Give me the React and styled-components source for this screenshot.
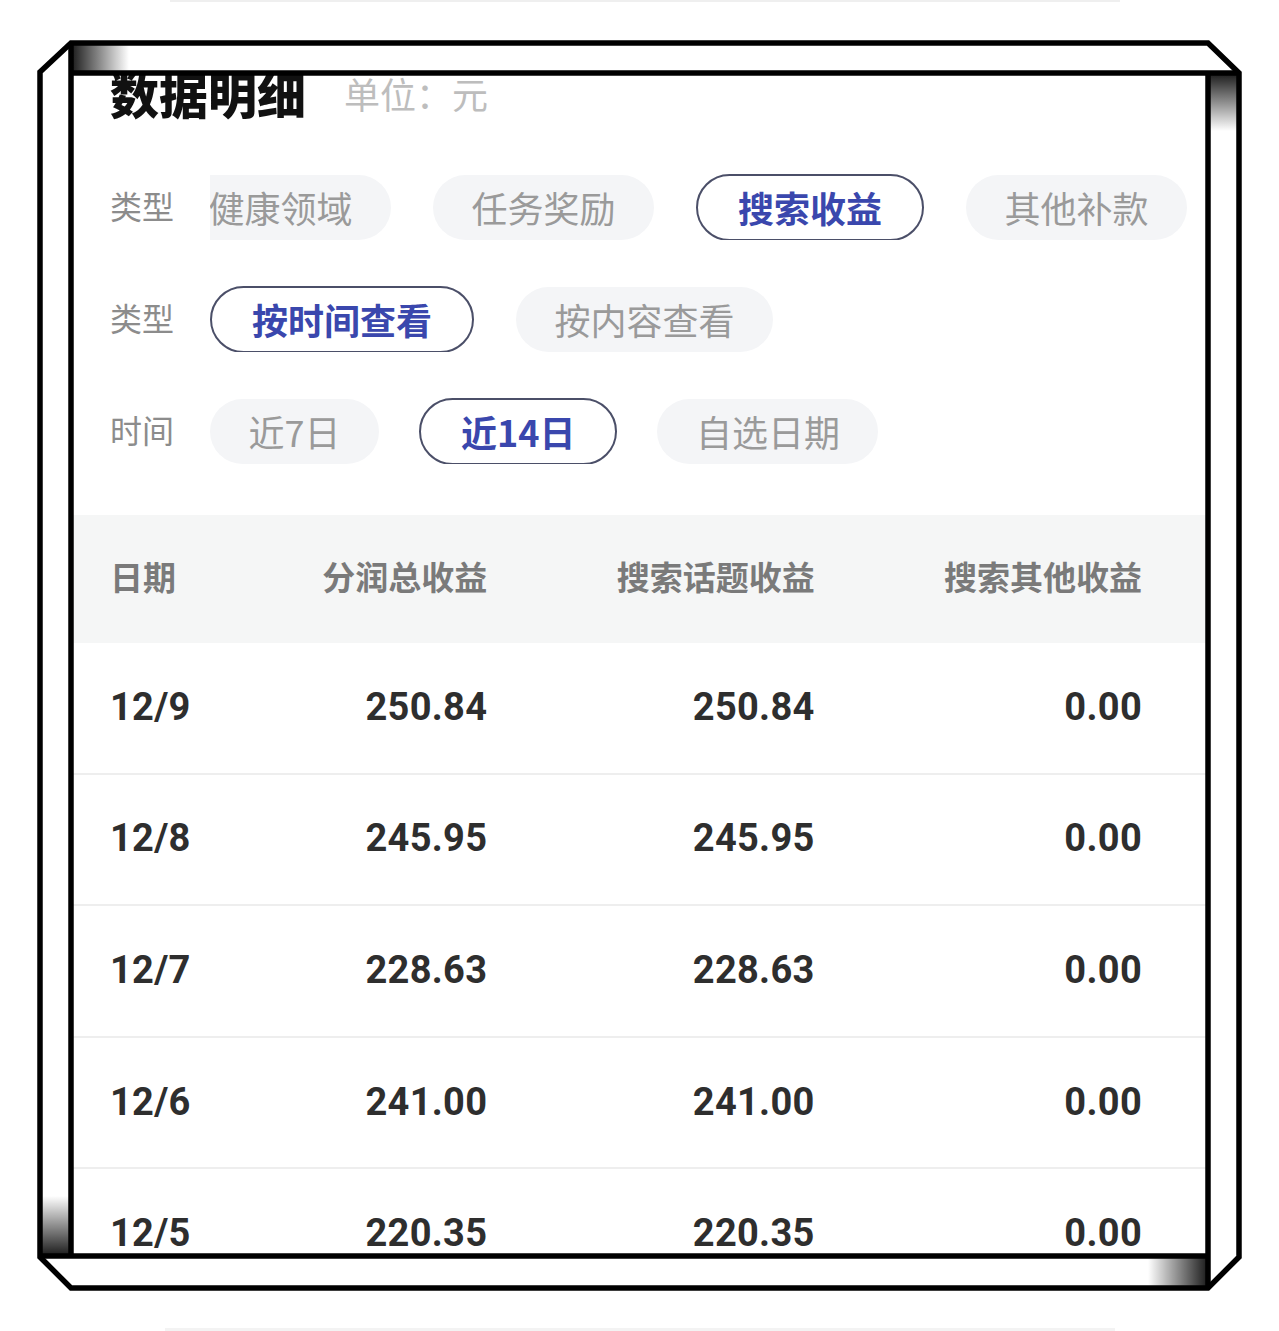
import React from 'react'
import styled, { createGlobalStyle } from 'styled-components'

const GlobalStyle = createGlobalStyle`
html, body {
  margin: 0;
  padding: 0;
  background: #FFFFFF;
}
* {
  box-sizing: border-box;
}
`

const Stage = styled.div`
position: relative;
width: 1279px;
height: 1331px;
padding: 74px 0 0 72px;
background: #FFFFFF;
font-family: "Noto Sans CJK SC", "Noto Sans", sans-serif;
overflow: hidden;
`
const Screen = styled.div`
width: 1136px;
height: 1182px;
overflow: hidden;
background: #FFFFFF;
`
const TitleRow = styled.div`
height: 46px;
margin-top: -3px;
padding-left: 38px;
display: flex;
flex-direction: row;
align-items: center;
`
const Title = styled.div`
font-size: 49px;
line-height: 49px;
font-weight: 900;
color: #111111;
margin-right: 38px;
margin-top: -3px;
`
const Unit = styled.div`
font-size: 36px;
line-height: 36px;
color: #BDBDBD;
margin-top: -2px;
`
const Filters = styled.div`
margin-top: 57px;
display: flex;
flex-direction: column;
gap: 46px;
`
const FilterRow = styled.div`
height: 66px;
padding-left: 38px;
display: flex;
flex-direction: row;
align-items: center;
`
const Label = styled.div`
width: 100px;
flex-shrink: 0;
font-size: 32px;
color: #8C8C8C;
margin-top: -4px;
`
const Track = styled.div`
flex: 1;
height: 100%;
overflow: hidden;
`
const ChipList = styled.div`
height: 100%;
display: flex;
flex-direction: row;
align-items: center;
gap: ${p => p.$gap || 42}px;
margin-left: ${p => p.$shift || 0}px;
`
const Chip = styled.div`
flex-shrink: 0;
height: ${p => (p.$active ? 67 : 65)}px;
padding: 0 ${p => (p.$active ? 40 : 38.5)}px;
border-radius: 34px;
display: flex;
align-items: center;
font-size: 36px;
line-height: 1;
white-space: nowrap;
background: ${p => (p.$active ? '#FFFFFF' : '#F4F5F7')};
border: ${p => (p.$active ? '2px solid #4B4F68' : 'none')};
color: ${p => (p.$active ? '#3A47AD' : '#9A9A9A')};
font-weight: ${p => (p.$active ? 700 : 400)};
`
const Table = styled.div`
margin-top: 51px;
`
const HeadRow = styled.div`
height: 128px;
padding: 0 66px 6px 38px;
background: #F5F6F6;
display: grid;
grid-template-columns: 50px repeat(3, 1fr);
align-items: center;
`
const HeadCell = styled.div`
font-size: 33px;
font-weight: 700;
color: #7A7A7A;
white-space: nowrap;
text-align: ${p => (p.$right ? 'right' : 'left')};
`
const Row = styled.div`
height: 131.6px;
padding: 0 66px 0 38px;
border-bottom: 2px solid #EEEEEE;
display: grid;
grid-template-columns: 50px repeat(3, 1fr);
align-items: center;
`
const Cell = styled.div`
font-family: Roboto, "Liberation Sans", sans-serif;
font-size: 38px;
font-weight: 700;
color: #2E2E2E;
letter-spacing: 0.3px;
white-space: nowrap;
margin-top: -2px;
text-align: ${p => (p.$right ? 'right' : 'left')};
`
const FrameArt = styled.svg`
position: absolute;
left: 0;
top: 0;
width: 1279px;
height: 1331px;
pointer-events: none;
`

const Frame = () => (
    <FrameArt viewBox="0 0 1279 1331">
        <defs>
            <linearGradient id="shadeTop" x1="0" y1="0" x2="1" y2="0">
                <stop offset="0" stopColor="#000" stopOpacity="0.9" />
                <stop offset="1" stopColor="#000" stopOpacity="0" />
            </linearGradient>
            <linearGradient id="shadeRight" x1="0" y1="0" x2="0" y2="1">
                <stop offset="0" stopColor="#000" stopOpacity="0.9" />
                <stop offset="1" stopColor="#000" stopOpacity="0" />
            </linearGradient>
            <linearGradient id="shadeBottom" x1="1" y1="0" x2="0" y2="0">
                <stop offset="0" stopColor="#000" stopOpacity="0.9" />
                <stop offset="1" stopColor="#000" stopOpacity="0" />
            </linearGradient>
            <linearGradient id="shadeLeft" x1="0" y1="1" x2="0" y2="0">
                <stop offset="0" stopColor="#000" stopOpacity="0.9" />
                <stop offset="1" stopColor="#000" stopOpacity="0" />
            </linearGradient>
        </defs>
        <rect x="170" y="0" width="950" height="2" fill="#EFEFEF" />
        <rect x="165" y="1328" width="950" height="3" fill="#F3F3F3" />
        <rect x="71" y="43" width="58" height="30" fill="url(#shadeTop)" />
        <rect x="1208" y="73" width="31" height="58" fill="url(#shadeRight)" />
        <rect x="1148" y="1256" width="60" height="32" fill="url(#shadeBottom)" />
        <rect x="40" y="1196" width="31" height="60" fill="url(#shadeLeft)" />
        <g fill="none" stroke="#000" strokeWidth="5.5" strokeLinejoin="miter">
            <path d="M71 43 L1208 43 L1239 73 L1239 1257 L1208 1288 L71 1288 L40 1257 L40 72 Z" />
            <path d="M71 43 L71 1256" />
            <path d="M71 73 L1239 73" />
            <path d="M1208 73 L1208 1288" />
            <path d="M40 1256 L1208 1256" />
        </g>
    </FrameArt>
)

const rows = [
    ['12/9', '250.84', '250.84', '0.00'],
    ['12/8', '245.95', '245.95', '0.00'],
    ['12/7', '228.63', '228.63', '0.00'],
    ['12/6', '241.00', '241.00', '0.00'],
    ['12/5', '220.35', '220.35', '0.00'],
]

const App = () => {
    return (
        <Stage>
            <GlobalStyle />
            <Screen>
                <TitleRow>
                    <Title>数据明细</Title>
                    <Unit>单位：元</Unit>
                </TitleRow>
                <Filters>
                    <FilterRow>
                        <Label>类型</Label>
                        <Track>
                            <ChipList $shift={-40}>
                                <Chip>健康领域</Chip>
                                <Chip>任务奖励</Chip>
                                <Chip $active>搜索收益</Chip>
                                <Chip>其他补款</Chip>
                            </ChipList>
                        </Track>
                    </FilterRow>
                    <FilterRow>
                        <Label>类型</Label>
                        <Track>
                            <ChipList>
                                <Chip $active>按时间查看</Chip>
                                <Chip>按内容查看</Chip>
                            </ChipList>
                        </Track>
                    </FilterRow>
                    <FilterRow>
                        <Label>时间</Label>
                        <Track>
                            <ChipList $gap={40}>
                                <Chip>近7日</Chip>
                                <Chip $active>近14日</Chip>
                                <Chip>自选日期</Chip>
                            </ChipList>
                        </Track>
                    </FilterRow>
                </Filters>
                <Table>
                    <HeadRow>
                        <HeadCell>日期</HeadCell>
                        <HeadCell $right>分润总收益</HeadCell>
                        <HeadCell $right>搜索话题收益</HeadCell>
                        <HeadCell $right>搜索其他收益</HeadCell>
                    </HeadRow>
                    {rows.map(r => (
                        <Row key={r[0]}>
                            <Cell>{r[0]}</Cell>
                            <Cell $right>{r[1]}</Cell>
                            <Cell $right>{r[2]}</Cell>
                            <Cell $right>{r[3]}</Cell>
                        </Row>
                    ))}
                </Table>
            </Screen>
            <Frame />
        </Stage>
    )
}

export default App
